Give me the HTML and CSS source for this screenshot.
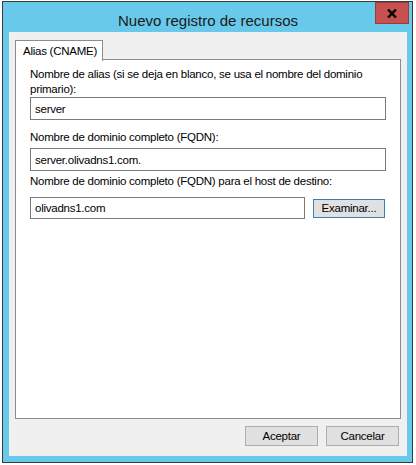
FILE: index.html
```html
<!DOCTYPE html>
<html lang="es">
<head>
<meta charset="utf-8">
<title>Nuevo registro de recursos</title>
<link rel="stylesheet" href="styles.css">
</head>
<body>
<div class="window">
  <div class="titlebar">
    <span class="title">Nuevo registro de recursos</span>
    <button class="close" aria-label="Cerrar">
      <svg width="10" height="9" viewBox="0 0 10 9"><path d="M1 0.5 L9 8.5 M9 0.5 L1 8.5" stroke="#000" stroke-width="2.4" fill="none"/></svg>
    </button>
  </div>
  <div class="client">
    <div class="tabs"><div class="tab">Alias (CNAME)</div></div>
    <div class="panel">
      <div class="label first">Nombre de alias (si se deja en blanco, se usa el nombre del dominio<br>primario):</div>
      <div class="input">server</div>
      <div class="label second">Nombre de dominio completo (FQDN):</div>
      <div class="input">server.olivadns1.com.</div>
      <div class="label third">Nombre de dominio completo (FQDN) para el host de destino:</div>
      <div class="row">
        <div class="input short">olivadns1.com</div>
        <button class="btn focus">Examinar...</button>
      </div>
    </div>
    <div class="footer">
      <button class="btn">Aceptar</button>
      <button class="btn">Cancelar</button>
    </div>
  </div>
</div>
</body>
</html>
```
FILE: styles.css
```css
html, body {
  margin: 0;
  padding: 0;
  background: #ffffff;
}
body {
  font-family: "Liberation Sans", Arial, sans-serif;
  font-size: 11.5px;
  letter-spacing: -0.25px;
  color: #000;
}
.window {
  position: relative;
  margin: 1px 0 0 2px;
  width: 411px;
  height: 462px;
  box-sizing: border-box;
  border: 1px solid #3a3a3a;
  background: #68c9ea;
  padding: 0 5px 6px 6px;
  display: flex;
  flex-direction: column;
}
.titlebar {
  height: 30px;
  display: flex;
  align-items: center;
  justify-content: center;
}
.title {
  font-size: 15px;
  letter-spacing: 0;
  color: #1a1a1a;
  margin-top: 7px;
}
.close {
  position: absolute;
  top: 0;
  right: 3px;
  width: 34px;
  height: 22px;
  box-sizing: border-box;
  border: 1px solid #923f3b;
  background: #c75050;
  padding: 0;
  display: flex;
  align-items: center;
  justify-content: center;
}
.client {
  flex: 1;
  background: #f0f0f0;
  padding: 8px 6px 9px 6px;
  display: flex;
  flex-direction: column;
}
.tabs {
  display: flex;
  height: 20px;
  position: relative;
  z-index: 1;
  margin-bottom: -1px;
}
.tab {
  box-sizing: border-box;
  height: 21px;
  border: 1px solid #898c95;
  border-bottom: none;
  background: #ffffff;
  padding: 4px 5px 0 7px;
  white-space: nowrap;
}
.panel {
  height: 360px;
  box-sizing: border-box;
  border: 1px solid #898c95;
  background: #ffffff;
  padding: 7px 14px 0 14px;
  display: flex;
  flex-direction: column;
}
.label {
  line-height: 15px;
  white-space: nowrap;
}
.second { margin-top: 10px; margin-bottom: 3px; }
.third { margin-top: 3px; margin-bottom: 8px; }
.input {
  box-sizing: border-box;
  height: 23px;
  border: 1px solid #7a7a7a;
  background: #fff;
  padding: 0 4px;
  display: flex;
  align-items: center;
}
.row {
  display: flex;
  align-items: center;
  gap: 8px;
}
.input.short {
  width: 275px;
  height: 22px;
}
.btn {
  box-sizing: border-box;
  font-family: inherit;
  font-size: 11.5px;
  letter-spacing: -0.25px;
  color: #000;
  width: 72px;
  height: 20px;
  border: 1px solid #adadad;
  background: #e1e1e1;
  padding: 0;
  border-radius: 0;
}
.btn.focus {
  border-color: #3c7fb1;
  height: 19px;
}
.footer {
  margin-top: 7px;
  display: flex;
  justify-content: flex-end;
  gap: 8px;
  padding-right: 2px;
}
.footer .btn { width: 73px; }
```
